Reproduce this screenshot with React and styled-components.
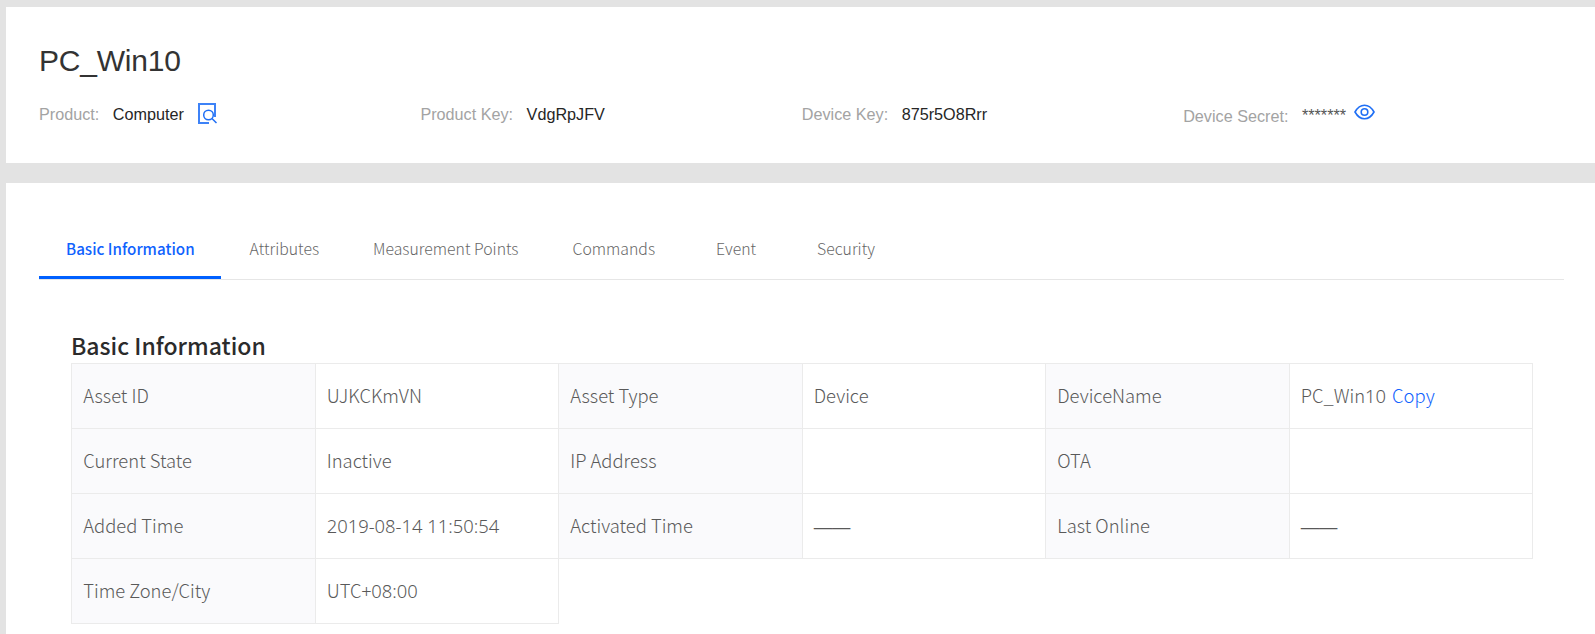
import React from "react";
import styled, { createGlobalStyle } from "styled-components";

const Global = createGlobalStyle`
  html, body { margin: 0; padding: 0; background: #e3e3e3; }
  body { width: 1595px; height: 634px; overflow: hidden; }
`;
const Page = styled.div`
  padding: 7px 0 0 6px;
  display: flex;
  flex-direction: column;
  gap: 20px;
`;
const HeaderPanel = styled.section`
  background: #fff;
  height: 156px;
  padding: 30px 0 0 33px;
  box-sizing: border-box;
  font-family: "Liberation Sans", Arial, sans-serif;
`;
const Title = styled.h1`
  margin: 0;
  font-size: 30px;
  line-height: 48px;
  font-weight: 400;
  letter-spacing: -0.2px;
  color: #333;
`;
const Meta = styled.div`
  display: grid;
  grid-template-columns: repeat(4, 381.4px);
  margin-top: 15px;
  height: 26px;
`;
const Field = styled.div`
  display: flex;
  align-items: center;
  font-size: 16.2px;
  line-height: 24px;
`;
const MetaLabel = styled.span`
  color: #a3a3a3;
  margin-right: 13.5px;
  ${(p) => p.$low && "padding-top: 4px;"}
`;
const MetaValue = styled.span`
  color: #262626;
  ${(p) => p.$masked && "color: #555; margin-top: 1px;"}
`;
const IconSlot = styled.span`
  display: inline-flex;
  margin-left: ${(p) => p.$gap}px;
  margin-top: ${(p) => p.$top}px;
`;
const ContentPanel = styled.section`
  background: #fff;
  padding: 36px 31px 0 33px;
  height: 460px;
  box-sizing: border-box;
  font-family: "Noto Sans CJK SC", "Noto Sans", sans-serif;
`;
const Tabs = styled.nav`
  display: flex;
  height: 60px;
  border-bottom: 1px solid #e6e6e6;
`;
const Tab = styled.div`
  padding: 0 27px;
  height: 60px;
  line-height: 60px;
  font-size: 15.8px;
  box-sizing: border-box;
  white-space: nowrap;
  color: #666;
  font-weight: 300;
  border-bottom: 3px solid transparent;
  ${(p) =>
    p.$active &&
    "line-height: 58px; font-size: 15.2px; color: #0f62fe; font-weight: 500; border-bottom-color: #0060ff; padding-right: 26px; margin-right: 2px;"}
  ${(p) => p.$roomy && "margin: 0 7px;"}
`;
const Section = styled.div`
  padding: 48px 0 0 32px;
`;
const SectionTitle = styled.h2`
  margin: 0;
  font-size: 23px;
  line-height: 35px;
  font-weight: 500;
  color: #2b2b2b;
`;
const InfoTable = styled.table`
  border-collapse: collapse;
  table-layout: fixed;
  width: 1462px;
  font-size: 18.4px;
  font-weight: 300;
`;
const Row = styled.tr`
  height: 65px;
`;
const Label = styled.td`
  background: #fafafc;
  border: 1px solid #ebebeb;
  padding: 0 0 3px 11.2px;
  color: #595959;
`;
const Value = styled.td`
  background: #fff;
  border: 1px solid #ebebeb;
  padding: 0 0 3px 11.2px;
  color: #595959;
`;
const Digits = styled.span`
  font-family: "Noto Sans", sans-serif;
  font-weight: 300;
`;
const Dash = styled.span`
  font-family: "Liberation Sans", sans-serif;
  font-weight: 400;
`;
const CopyLink = styled.span`
  color: #0f62fe;
  margin-left: 6px;
`;

const DocIcon = () => (
  <svg width="20" height="22" viewBox="0 0 20 22" fill="none">
    <path d="M11 20H1V1h16v13" stroke="#3d82f7" strokeWidth="2" />
    <circle cx="10.500" cy="12" r="4.800" stroke="#1f6ff5" strokeWidth="1.500" />
    <path d="M14 15.500l4.500 4.500" stroke="#1f6ff5" strokeWidth="1.500" />
  </svg>
);
const EyeIcon = () => (
  <svg width="21" height="16" viewBox="0 0 21 16" fill="none">
    <path d="M1 8C3.500 3.500 6.500 1.200 10.500 1.200S17.500 3.500 20 8c-2.500 4.500-5.500 6.800-9.500 6.800S3.500 12.500 1 8z" stroke="#1f6ff5" strokeWidth="1.600" />
    <circle cx="10.500" cy="8" r="3.300" stroke="#1f6ff5" strokeWidth="1.600" />
  </svg>
);

const tabs = ["Basic Information", "Attributes", "Measurement Points", "Commands", "Event", "Security"];

export default function App() {
  return (
    <Page>
      <Global />
      <HeaderPanel>
        <Title>PC_Win10</Title>
        <Meta>
          <Field>
            <MetaLabel>Product:</MetaLabel>
            <MetaValue>Computer</MetaValue>
            <IconSlot $gap={14} $top={-1}><DocIcon /></IconSlot>
          </Field>
          <Field>
            <MetaLabel>Product Key:</MetaLabel>
            <MetaValue>VdgRpJFV</MetaValue>
          </Field>
          <Field>
            <MetaLabel>Device Key:</MetaLabel>
            <MetaValue>875r5O8Rrr</MetaValue>
          </Field>
          <Field>
            <MetaLabel $low>Device Secret:</MetaLabel>
            <MetaValue $masked>*******</MetaValue>
            <IconSlot $gap={8} $top={-5}><EyeIcon /></IconSlot>
          </Field>
        </Meta>
      </HeaderPanel>
      <ContentPanel>
        <Tabs>
          {tabs.map((t, i) => (
            <Tab key={t} $active={i === 0} $roomy={t === "Event"}>{t}</Tab>
          ))}
        </Tabs>
        <Section>
          <SectionTitle>Basic Information</SectionTitle>
          <InfoTable>
            <tbody>
              <Row>
                <Label>Asset ID</Label><Value>UJKCKmVN</Value>
                <Label>Asset Type</Label><Value>Device</Value>
                <Label>DeviceName</Label><Value>PC_Win<Digits>10</Digits><CopyLink>Copy</CopyLink></Value>
              </Row>
              <Row>
                <Label>Current State</Label><Value>Inactive</Value>
                <Label>IP Address</Label><Value></Value>
                <Label>OTA</Label><Value></Value>
              </Row>
              <Row>
                <Label>Added Time</Label><Value><Digits>2019-08-14 11:50:54</Digits></Value>
                <Label>Activated Time</Label><Value><Dash>——</Dash></Value>
                <Label>Last Online</Label><Value><Dash>——</Dash></Value>
              </Row>
              <Row>
                <Label>Time Zone/City</Label><Value>UTC+<Digits>08:00</Digits></Value>
              </Row>
            </tbody>
          </InfoTable>
        </Section>
      </ContentPanel>
    </Page>
  );
}
